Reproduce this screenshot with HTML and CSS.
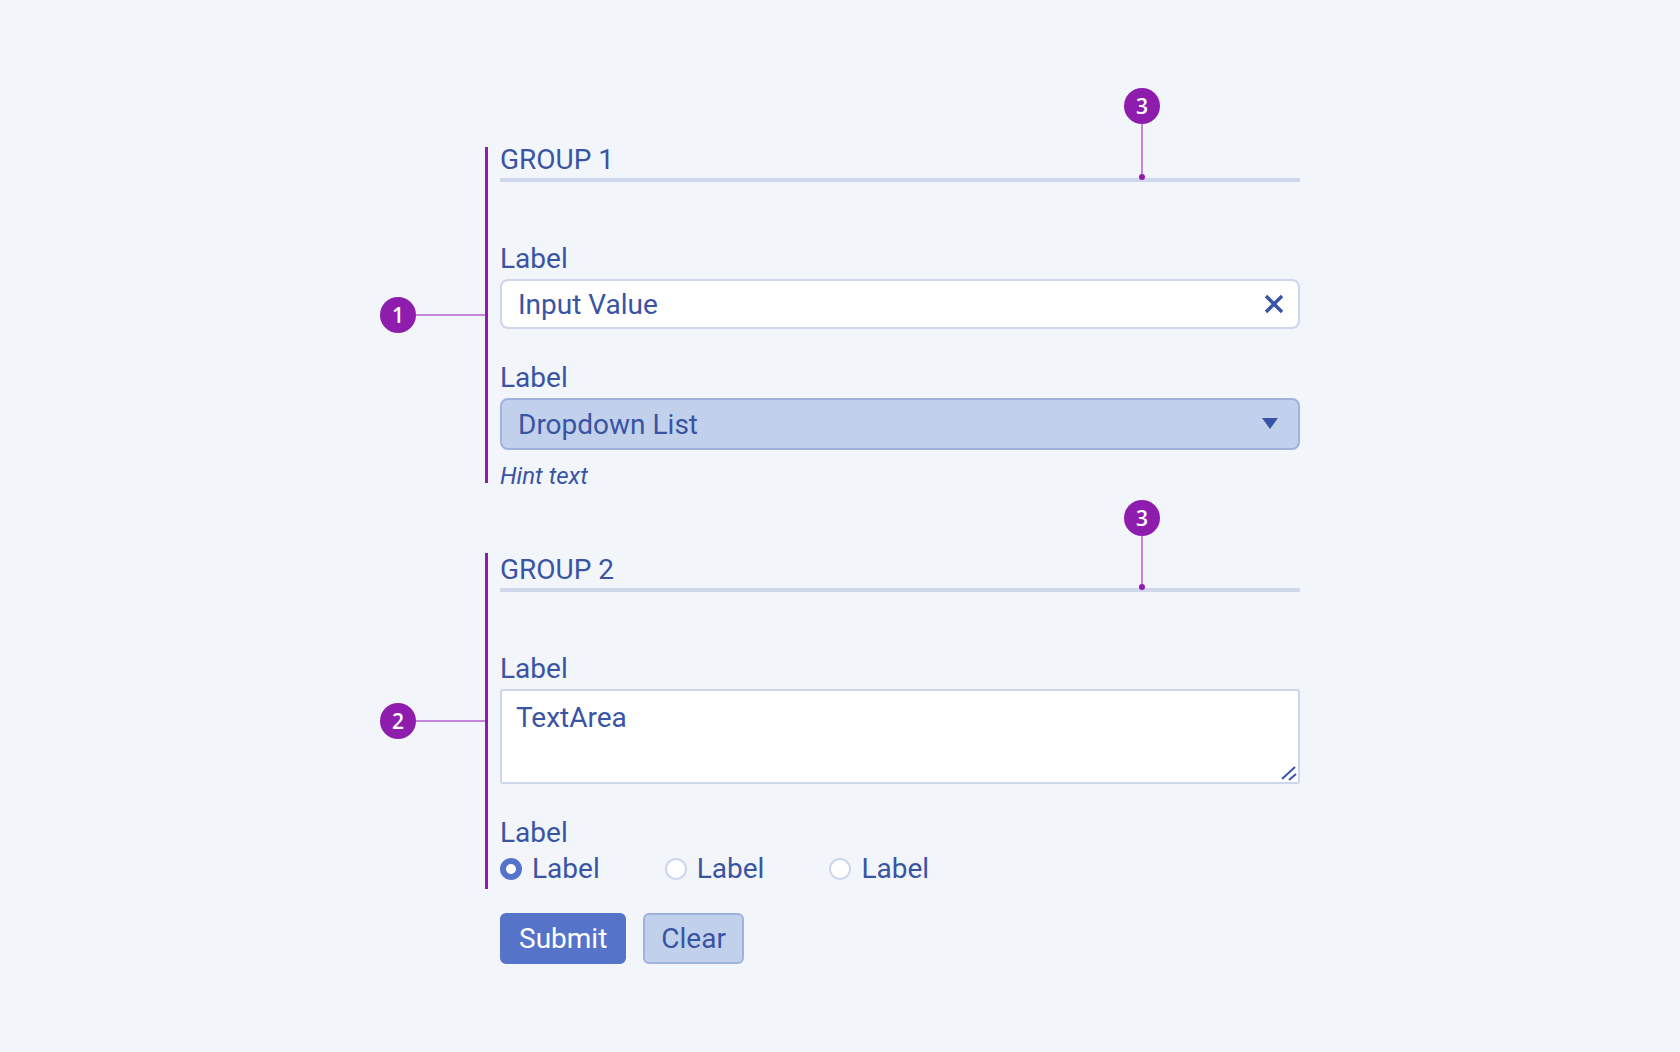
FILE: index.html
```html
<!DOCTYPE html>
<html lang="en">
<head>
  <meta charset="UTF-8">
  <title>Form Groups</title>
  <link rel="stylesheet" href="styles.css">
</head>
<body>

  <form class="form" onsubmit="return false">

    <!-- Group 1 -->
    <section class="group group-one">
      <span class="bracket"><span class="badge">1</span></span>
      <div class="group-head">
        <h2 class="group-title">GROUP 1</h2>
        <span class="pin">
          <span class="badge">3</span>
          <span class="stem"></span>
          <span class="dot"></span>
        </span>
      </div>

      <div class="field field-first">
        <label class="label" for="name">Label</label>
        <div class="input-box">
          <input class="input" id="name" type="text" value="Input Value">
          <button type="button" class="clear-btn" aria-label="Clear">
            <svg width="20" height="20" viewBox="0 0 20 20">
              <path d="M2 2 L18 18 M18 2 L2 18" stroke="#3a54a4" stroke-width="3.4" fill="none"/>
            </svg>
          </button>
        </div>
      </div>

      <div class="field">
        <label class="label" for="list">Label</label>
        <div class="select-box">
          <select class="select" id="list">
            <option>Dropdown List</option>
          </select>
          <svg class="select-arrow" width="16" height="11" viewBox="0 0 16 11">
            <path d="M0 0 H16 L8 11 Z" fill="#3a54a4"/>
          </svg>
        </div>
        <p class="hint">Hint text</p>
      </div>
    </section>

    <!-- Group 2 -->
    <section class="group group-two">
      <span class="bracket"><span class="badge">2</span></span>
      <div class="group-head">
        <h2 class="group-title">GROUP 2</h2>
        <span class="pin">
          <span class="badge">3</span>
          <span class="stem"></span>
          <span class="dot"></span>
        </span>
      </div>

      <div class="field field-first">
        <label class="label" for="notes">Label</label>
        <div class="textarea-box">
          <textarea class="textarea" id="notes">TextArea</textarea>
          <svg class="grip" width="18" height="16" viewBox="0 0 18 16">
            <path d="M2 13 L15 1 M9 14 L16 8" stroke="#3a54a4" stroke-width="2" fill="none"/>
          </svg>
        </div>
      </div>

      <div class="field">
        <span class="label">Label</span>
        <div class="radios">
          <label class="radio-option"><input class="radio" type="radio" name="opt" checked> Label</label>
          <label class="radio-option"><input class="radio" type="radio" name="opt"> Label</label>
          <label class="radio-option"><input class="radio" type="radio" name="opt"> Label</label>
        </div>
      </div>
    </section>

    <div class="actions">
      <button type="submit" class="btn btn-primary">Submit</button>
      <button type="reset" class="btn btn-secondary">Clear</button>
    </div>
  </form>

</body>
</html>
```

FILE: styles.css
```css
* { box-sizing: border-box; }

html, body {
  margin: 0;
  padding: 0;
  background: #f2f5fa;
  font-family: Roboto, 'Liberation Sans', sans-serif;
  color: #3a54a4;
}

.form {
  width: 800px;
  margin-left: 500px;
  padding-top: 144px;
}

.group {
  position: relative;
}

.group + .group {
  margin-top: 64px;
}

/* Annotation bracket + side badge */
.bracket {
  position: absolute;
  left: -15px;
  top: 3px;
  bottom: 7px;
  width: 3px;
  background: #8e1cac;
}

.group-two .bracket {
  top: -1px;
  bottom: -4px;
}

.bracket::after {
  content: '';
  position: absolute;
  right: 3px;
  top: 50%;
  width: 69px;
  height: 2px;
  margin-top: -1px;
  background: #c485da;
}

.bracket .badge {
  position: absolute;
  right: 72px;
  top: 50%;
  margin-top: -18px;
}

.badge {
  display: block;
  width: 36px;
  height: 36px;
  border-radius: 50%;
  background: #8e1cac;
  color: #fff;
  font: 600 21px/36px 'Open Sans', sans-serif;
  text-align: center;
}

/* Group header */
.group-head {
  position: relative;
  padding-bottom: 2px;
  border-bottom: 4px solid #cfd7ea;
}

.group-title {
  margin: 0;
  font-size: 28px;
  font-weight: 400;
  line-height: 32px;
}

.pin {
  position: absolute;
  left: 624px;
  top: -56px;
  width: 36px;
  display: flex;
  flex-direction: column;
  align-items: center;
}

.group-two .pin {
  top: -54px;
}

.stem {
  width: 2px;
  height: 50px;
  background: #c485da;
}

.group-two .stem {
  height: 48px;
}

.dot {
  width: 6px;
  height: 6px;
  border-radius: 50%;
  background: #8e1cac;
}

/* Fields */
.field {
  margin-top: 33px;
}

.field-first {
  margin-top: 61px;
}

.label {
  display: block;
  font-size: 28px;
  line-height: 32px;
  margin-bottom: 4px;
}

.input-box {
  display: flex;
  align-items: center;
  height: 50px;
  background: #fff;
  border: 2px solid #cdd6eb;
  border-radius: 8px;
  padding: 0 14px 0 16px;
}

.input {
  flex: 1;
  min-width: 0;
  border: none;
  outline: none;
  background: transparent;
  padding: 0;
  font: inherit;
  font-size: 28px;
  color: inherit;
}

.clear-btn {
  display: flex;
  width: 20px;
  height: 20px;
  padding: 0;
  border: none;
  background: none;
  cursor: pointer;
}

.select-box {
  position: relative;
}

.select {
  appearance: none;
  -webkit-appearance: none;
  display: block;
  width: 100%;
  height: 52px;
  border: 2px solid #9fb2dc;
  border-radius: 8px;
  background: #c2d1eb;
  padding: 0 50px 0 16px;
  font: inherit;
  font-size: 28px;
  color: inherit;
  outline: none;
}

.select-arrow {
  position: absolute;
  right: 22px;
  top: 50%;
  margin-top: -6px;
  pointer-events: none;
}

.hint {
  margin: 12px 0 0;
  font-size: 24px;
  font-style: italic;
  line-height: 28px;
}

.textarea-box {
  position: relative;
}

.textarea {
  display: block;
  width: 100%;
  height: 95px;
  border: 2px solid #cdd6eb;
  border-radius: 3px;
  background: #fff;
  padding: 11px 14px;
  font: inherit;
  font-size: 28px;
  line-height: 32px;
  color: inherit;
  resize: none;
  outline: none;
}

.grip {
  position: absolute;
  right: 2px;
  bottom: 2px;
}

.radios {
  display: flex;
  gap: 65px;
}

.radio-option {
  display: flex;
  align-items: center;
  gap: 10px;
  font-size: 28px;
  line-height: 32px;
  cursor: pointer;
}

.radio {
  appearance: none;
  -webkit-appearance: none;
  margin: 0;
  width: 22px;
  height: 22px;
  border-radius: 50%;
  border: 2px solid #cdd6eb;
  background: #fff;
}

.radio:checked {
  border: 6px solid #5573c8;
}

/* Buttons */
.actions {
  display: flex;
  gap: 17px;
  margin-top: 28px;
}

.btn {
  height: 51px;
  padding: 0 17px;
  border: 2px solid;
  border-radius: 6px;
  font: inherit;
  font-size: 28px;
  cursor: pointer;
}

.btn-primary {
  background: #5573c8;
  border-color: #5573c8;
  color: #fff;
}

.btn-secondary {
  padding: 0 16px;
  background: #c2d1eb;
  border-color: #9fb2dc;
  color: #3a54a4;
}
```
